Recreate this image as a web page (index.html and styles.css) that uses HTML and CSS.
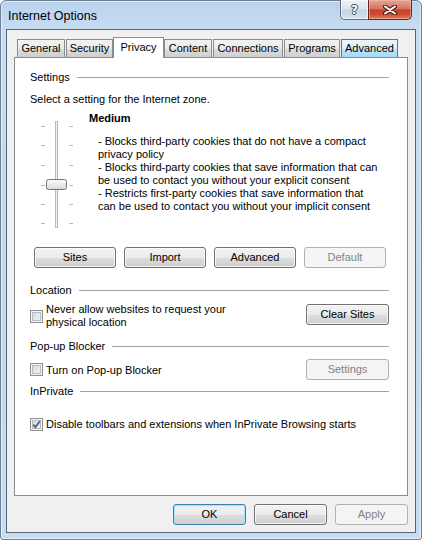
FILE: index.html
```html
<!DOCTYPE html>
<html lang="en">
<head>
<meta charset="utf-8">
<title>Internet Options</title>
<link rel="stylesheet" href="styles.css">
</head>
<body>
<div class="window">
  <div class="titlebar">
    <span class="title">Internet Options</span>
    <div class="caption-buttons">
      <div class="cap-btn help"><span>?</span></div>
      <div class="cap-btn close">
        <svg width="14" height="10" viewBox="0 0 14 10">
          <path d="M2 1.5 L12 8.5 M12 1.5 L2 8.5" stroke="#4a1c14" stroke-width="4" stroke-linecap="round"/>
          <path d="M2 1.5 L12 8.5 M12 1.5 L2 8.5" stroke="#ffffff" stroke-width="2" stroke-linecap="round"/>
        </svg>
      </div>
    </div>
  </div>
  <div class="client">
    <div class="tabs">
      <div class="tab tab-general">General</div>
      <div class="tab tab-security">Security</div>
      <div class="tab tab-privacy selected">Privacy</div>
      <div class="tab tab-content">Content</div>
      <div class="tab tab-connections">Connections</div>
      <div class="tab tab-programs">Programs</div>
      <div class="tab tab-advanced hover">Advanced</div>
    </div>
    <div class="panel">
      <div class="group-header">Settings</div>
      <div class="zone-line">Select a setting for the Internet zone.</div>
      <div class="slider-area">
        <svg class="slider" width="33" height="108" viewBox="0 0 33 108">
          <defs>
            <linearGradient id="thumb" x1="0" y1="0" x2="0" y2="1">
              <stop offset="0" stop-color="#fbfbfb"/>
              <stop offset="0.5" stop-color="#ececec"/>
              <stop offset="1" stop-color="#d6d6d6"/>
            </linearGradient>
          </defs>
          <g fill="#b8b8b8">
            <rect x="0" y="5" width="4" height="1"/>
            <rect x="0" y="24" width="4" height="1"/>
            <rect x="0" y="44" width="4" height="1"/>
            <rect x="0" y="64" width="4" height="1"/>
            <rect x="0" y="83" width="4" height="1"/>
            <rect x="0" y="102" width="4" height="1"/>
            <rect x="28" y="5" width="4" height="1"/>
            <rect x="28" y="24" width="4" height="1"/>
            <rect x="28" y="44" width="4" height="1"/>
            <rect x="28" y="64" width="4" height="1"/>
            <rect x="28" y="83" width="4" height="1"/>
            <rect x="28" y="102" width="4" height="1"/>
          </g>
          <rect x="14.5" y="0.5" width="2" height="106" fill="#efefef" stroke="#b9b9b9"/>
          <rect x="5.5" y="58.5" width="20" height="10" rx="2" fill="url(#thumb)" stroke="#767676"/>
        </svg>
        <div class="level">
          <div class="level-name">Medium</div>
          <div class="level-desc">
            - Blocks third-party cookies that do not have a compact<br>
            privacy policy<br>
            - Blocks third-party cookies that save information that can<br>
            be used to contact you without your explicit consent<br>
            - Restricts first-party cookies that save information that<br>
            can be used to contact you without your implicit consent
          </div>
        </div>
      </div>
      <div class="btn-row">
        <div class="btn wide">Sites</div>
        <div class="btn wide">Import</div>
        <div class="btn wide">Advanced</div>
        <div class="btn wide disabled">Default</div>
      </div>

      <div class="group-header location-header">Location</div>
      <div class="option-row location-row">
        <div class="check-label">
          <span class="checkbox"></span>
          <span class="label-text">Never allow websites to request your<br>physical location</span>
        </div>
        <div class="btn side">Clear Sites</div>
      </div>

      <div class="group-header popup-header">Pop-up Blocker</div>
      <div class="option-row popup-row">
        <div class="check-label">
          <span class="checkbox"></span>
          <span class="label-text">Turn on Pop-up Blocker</span>
        </div>
        <div class="btn side disabled">Settings</div>
      </div>

      <div class="group-header inprivate-header">InPrivate</div>
      <div class="option-row inprivate-row">
        <div class="check-label">
          <span class="checkbox checked">
            <svg width="9" height="9" viewBox="0 0 9 9"><path d="M1.3 4.6 L3.4 7.2 L7.8 1.3" fill="none" stroke="#4b62a0" stroke-width="1.9"/></svg>
          </span>
          <span class="label-text">Disable toolbars and extensions when InPrivate Browsing starts</span>
        </div>
      </div>
    </div>
    <div class="dialog-buttons">
      <div class="btn dlg default">OK</div>
      <div class="btn dlg">Cancel</div>
      <div class="btn dlg disabled">Apply</div>
    </div>
  </div>
</div>
</body>
</html>
```
FILE: styles.css
```css
* { box-sizing: border-box; }

html, body {
  margin: 0;
  padding: 0;
  width: 422px;
  height: 540px;
  overflow: hidden;
  background: #ffffff;
}

body {
  font-family: "Liberation Sans", Arial, sans-serif;
  font-size: 11px;
  color: #000;
}

.window {
  width: 422px;
  height: 540px;
  border: 1px solid #6d7f95;
  border-radius: 6px 6px 3px 3px;
  padding: 0 5px 6px 5px;
  background: linear-gradient(to bottom, #b9d2ec 0px, #c6dcf2 28px, #c3d9f0 60%, #c8ddf2 100%);
  box-shadow: inset 0 0 0 1px rgba(255,255,255,0.55);
  display: flex;
  flex-direction: column;
}

.titlebar {
  height: 28px;
  display: flex;
  justify-content: space-between;
  align-items: center;
  padding-left: 2px;
}

.title {
  font-size: 12.5px;
  color: #000;
  line-height: 16px;
  margin-top: 1px;
}

.caption-buttons {
  align-self: flex-start;
  display: flex;
  margin-top: -1px;
  margin-right: 4px;
}

.cap-btn {
  height: 20px;
  display: flex;
  align-items: center;
  justify-content: center;
  border: 1px solid #5f6f84;
  border-top: none;
}

.help {
  width: 28px;
  border-right: none;
  border-radius: 0 0 0 5px;
  background: linear-gradient(to bottom, #edf2f8 0%, #dbe4ee 48%, #c6d3e1 52%, #d5e1ee 100%);
  box-shadow: inset 0 0 0 1px rgba(255,255,255,0.6);
}

.help span {
  font-family: "DejaVu Sans", sans-serif;
  font-weight: bold;
  font-size: 12px;
  line-height: 12px;
  color: #ffffff;
  text-shadow: 1px 0 0 #3c4a5c, -1px 0 0 #3c4a5c, 0 1px 0 #3c4a5c, 0 -1px 0 #3c4a5c;
}

.close {
  width: 44px;
  border-color: #6a2a20;
  border-radius: 0 0 5px 0;
  background: linear-gradient(to bottom, #e8a595 0%, #d9735f 45%, #c9432c 52%, #cc4a32 75%, #e07e5f 100%);
  box-shadow: inset 0 0 0 1px rgba(255,200,190,0.45);
}

.client {
  flex: 1;
  border: 1px solid #56667a;
  background: #f0f0f0;
  display: flex;
  flex-direction: column;
}

.tabs {
  display: flex;
  align-items: flex-end;
  height: 27px;
  padding-left: 10px;
  position: relative;
  z-index: 1;
}

.tab {
  height: 18px;
  line-height: 17px;
  text-align: center;
  border: 1px solid #898c95;
  border-bottom: none;
  background: linear-gradient(to bottom, #f2f2f2 0%, #ebebeb 50%, #dddddd 51%, #cfcfcf 100%);
  margin-right: 1px;
  white-space: nowrap;
}

.tab.selected {
  height: 21px;
  line-height: 18px;
  background: #ffffff;
  margin-bottom: -1px;
  margin-left: -1px;
  margin-right: 0;
}

.tab.hover {
  border-color: #3c7fb1;
  background: linear-gradient(to bottom, #eaf6fd 0%, #d9f0fc 50%, #bee6fd 51%, #a7d9f5 100%);
}

.tab-general { width: 48px; }
.tab-security { width: 47px; }
.tab-privacy { width: 51px; }
.tab-content { width: 48px; }
.tab-connections { width: 70px; }
.tab-programs { width: 56px; }
.tab-advanced { width: 57px; }

.panel {
  margin-left: 7px;
  width: 394px;
  height: 439px;
  border: 1px solid #898c95;
  background: #ffffff;
  padding: 12px 18px 0 15px;
  display: flex;
  flex-direction: column;
}

.group-header {
  display: flex;
  align-items: center;
  height: 14px;
  line-height: 14px;
  white-space: nowrap;
}

.group-header::after {
  content: "";
  flex: 1;
  height: 1px;
  background: #a3a3a3;
  margin-left: 7px;
}

.zone-line {
  margin-top: 8px;
  line-height: 14px;
}

.slider-area {
  display: flex;
}

.slider {
  display: block;
  margin: 15px 0 0 11px;
  flex: none;
}

.level {
  margin-left: 15px;
}

.level-name {
  font-weight: bold;
  line-height: 14px;
  margin-top: 5px;
}

.level-desc {
  margin: 10px 0 0 9px;
  line-height: 13px;
}

.btn {
  height: 21px;
  line-height: 19px;
  text-align: center;
  border: 1px solid #707070;
  border-radius: 3px;
  background: linear-gradient(to bottom, #f2f2f2 0%, #ebebeb 50%, #dddddd 51%, #cfcfcf 100%);
  box-shadow: inset 0 0 0 1px rgba(255,255,255,0.75);
  color: #000;
  white-space: nowrap;
}

.btn.disabled {
  border-color: #adb2b5;
  background: #f4f4f4;
  box-shadow: none;
  color: #838383;
}

.btn.default {
  border-color: #3c7fb1;
  box-shadow: inset 0 0 0 1px #a6e0fb;
}

.btn-row {
  display: flex;
  gap: 8px;
  margin-top: 18px;
  padding-left: 4px;
}

.btn.wide { width: 82px; }
.btn.side { width: 83px; }

.location-header { margin-top: 15px; }
.popup-header { margin-top: 10px; }
.inprivate-header { margin-top: 4px; }

.option-row {
  display: flex;
  justify-content: space-between;
  align-items: center;
}

.location-row { margin-top: 6px; align-items: flex-start; }
.location-row .check-label { line-height: 13px; }
.location-row .btn { margin-top: 1px; }
.popup-row { margin-top: 6px; }
.inprivate-row { margin-top: 19px; }

.check-label {
  display: flex;
  align-items: center;
  line-height: 14px;
}

.checkbox {
  flex: none;
  width: 13px;
  height: 13px;
  border: 1px solid #8e8f8f;
  background: linear-gradient(135deg, #cfd2d6 0%, #e6e7e9 55%, #f6f6f6 100%);
  box-shadow: inset 0 0 0 1px #f4f4f4, inset 0 0 0 2px #b9bcc0;
  margin-right: 3px;
  display: flex;
  align-items: center;
  justify-content: center;
}

.checkbox svg { display: block; }

.dialog-buttons {
  display: flex;
  justify-content: flex-end;
  gap: 8px;
  margin-top: 8px;
  padding-right: 7px;
}

.btn.dlg { width: 73px; }
```
